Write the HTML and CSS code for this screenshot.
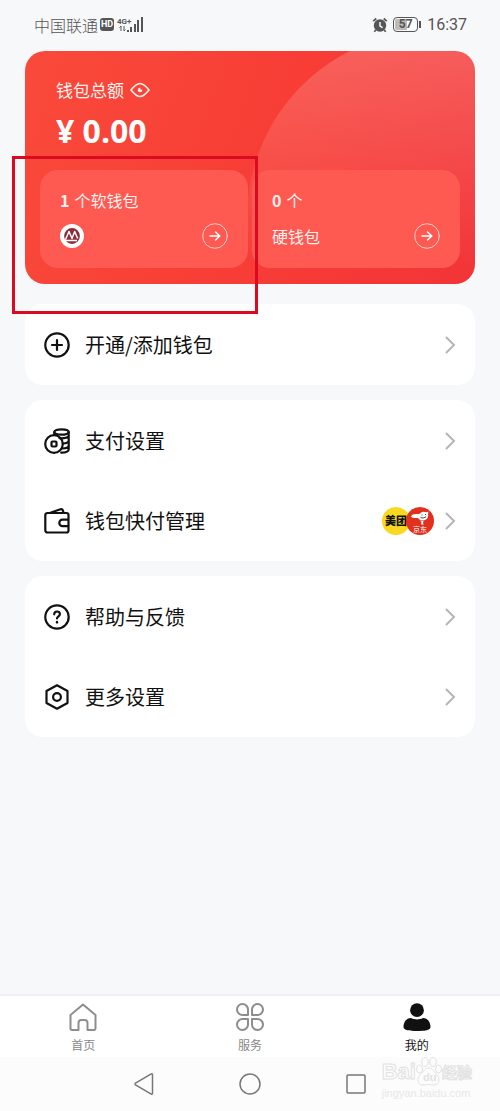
FILE: index.html
```html
<!DOCTYPE html>
<html lang="zh-CN">
<head>
<meta charset="utf-8">
<meta name="viewport" content="width=device-width, initial-scale=1">
<title>我的钱包</title>
<link rel="stylesheet" href="styles.css">
</head>
<body>
<header class="status">
  <div class="status-side">
    <span class="carrier">中国联通</span>
    <span class="hd">HD</span>
    <svg class="signal" width="28" height="18" viewBox="0 0 28 18" fill="currentColor">
      <text class="net" x="0" y="8">4G+</text>
      <path d="M4 10v5M2.500 11.500 4 10M7 10v5M7 15l1.500-1.500" stroke="currentColor" stroke-width="1" fill="none"/>
      <path d="M10 14h2v2h-2zM13 11h2v5h-2zM17 8h2v8h-2zM20 4h2v12h-2zM24 1h2v15h-2z"/>
    </svg>
  </div>
  <div class="status-side">
    <svg width="16" height="16" viewBox="0 0 16 16" fill="none" stroke="currentColor">
      <circle cx="8" cy="8.500" r="6.200" fill="currentColor" stroke="none"/>
      <path d="M1.200 4.200 4.300 1.500M14.800 4.200 11.700 1.500M3.800 13l-1.500 1.800M12.200 13l1.500 1.800" stroke-width="1.700"/>
      <path d="M8 5v4l2.600 1.600" stroke="#fff" stroke-width="1.400"/>
    </svg>
    <span class="battery">57</span>
    <time class="time">16:37</time>
  </div>
</header>

<main class="content">
  <section class="wallet">
    <div class="total">
      <h1 class="total-label">钱包总额
        <button class="eye" aria-label="显示金额"><svg width="20" height="18" viewBox="0 0 20 18" fill="none" stroke="currentColor" stroke-width="1.700"><path d="M1 9C5 4 7 2.500 10 2.500S15 4 19 9c-4 5-6 6.500-9 6.500S5 14 1 9z" stroke-linejoin="round"/><circle cx="10" cy="9" r="2.300" fill="currentColor" stroke="none"/><circle cx="11.200" cy="7.800" r="1" fill="#f94237" stroke="none"/></svg></button>
      </h1>
      <p class="amount">¥ 0.00</p>
    </div>
    <div class="kinds">
      <a class="kind" href="#">
        <span class="count"><b>1</b>个软钱包</span>
        <span class="kind-row">
          <svg width="24" height="24" viewBox="0 0 24 24"><circle cx="12" cy="12" r="12" fill="#fff"/><circle cx="12" cy="12" r="7.900" fill="#8e2a3a"/><path d="M5.500 15.500 9 7.500l3 7 2.700-7 3 7M5 16.500h12" fill="none" stroke="#fff" stroke-width="1.500" stroke-linejoin="round"/></svg>
          <svg class="go" width="26" height="26" viewBox="0 0 26 26"><circle cx="13" cy="13" r="12.300" opacity=".7"/><path d="M8 13h9.500M13.500 9 17.800 13l-4.300 4" stroke-width="1.500"/></svg>
        </span>
      </a>
      <a class="kind" href="#">
        <span class="count"><b>0</b>个</span>
        <span class="kind-row">硬钱包
          <svg class="go" width="26" height="26" viewBox="0 0 26 26"><circle cx="13" cy="13" r="12.300" opacity=".7"/><path d="M8 13h9.500M13.500 9 17.800 13l-4.300 4" stroke-width="1.500"/></svg>
        </span>
      </a>
    </div>
  </section>
  <div class="highlight"></div>

  <nav class="group">
    <a class="item" href="#">
      <svg class="icon" viewBox="0 0 26 26"><circle cx="13" cy="13" r="11.700"/><path d="M13 8v10M8 13h10"/></svg>
      <span class="name">开通/添加钱包</span>
      <svg class="chevron" viewBox="0 0 12 18"><path d="m2 1 8 8-8 8"/></svg>
    </a>
  </nav>

  <nav class="group">
    <a class="item" href="#">
      <svg class="icon" viewBox="0 0 26 26"><circle cx="10" cy="16" r="8.800"/><rect x="7.500" y="13.500" width="5" height="5" rx="1"/><ellipse cx="17.500" cy="4" rx="7.200" ry="2.700"/><path d="M10.300 4.200V7M24.700 4.200v17c0 2-2.500 3.300-7.500 3.500M15.500 10.200c5 .4 9.200-.7 9.200-2.700M18.800 15.500c3.500-.2 5.900-1.300 5.900-3M18.300 20.500c3.800-.1 6.400-1.300 6.400-3"/></svg>
      <span class="name">支付设置</span>
      <svg class="chevron" viewBox="0 0 12 18"><path d="m2 1 8 8-8 8"/></svg>
    </a>
    <a class="item" href="#">
      <svg class="icon" viewBox="0 0 26 26"><path d="M3.500 5h19a2 2 0 0 1 2 2v15.500a2 2 0 0 1-2 2h-19a2.200 2.200 0 0 1-2.200-2.200V7.200A2.200 2.200 0 0 1 3.500 5zM24.500 11.700H18.500a3.200 3.200 0 0 0 0 6.400h6M7 4.500l9.500-3.200c1.500-.5 2.300.3 3 3.200"/></svg>
      <span class="name">钱包快付管理</span>
      <span class="brands">
        <span class="brand meituan">美团</span>
        <span class="brand jd"><svg width="20" height="14" viewBox="0 0 20 14"><path d="M1 5.500C1.500 3.500 4 2.800 7 3c2 .1 3-.2 4-1.200 2-2 4-.8 5.500-.6L18.500.5 18 3c.8 4-1.500 6.300-5 6.300-2.500 0-4-.9-5-2.300C6 6.800 2 7.500 1 5.500z" fill="#fff"/><path d="M9.500 9.800h5l-1.500 1 .5 2.700h-2.500l.5-2.700z" fill="#fff"/><path d="M12 3.500v1M15.500 3v1M10.500 6.300c2 1.200 4.500.7 5.700-1" stroke="#333" stroke-width=".9" fill="none"/></svg><span class="jd-name">京东</span></span>
      </span>
      <svg class="chevron" viewBox="0 0 12 18"><path d="m2 1 8 8-8 8"/></svg>
    </a>
  </nav>

  <nav class="group">
    <a class="item" href="#">
      <svg class="icon" viewBox="0 0 26 26"><circle cx="13" cy="13" r="11.700"/><path d="M10.200 10.300C10.300 6.500 16 6.700 15.900 10.200c0 2.100-2.900 2.200-2.900 4.300"/><path d="M13 18v.4" stroke-width="2.400"/></svg>
      <span class="name">帮助与反馈</span>
      <svg class="chevron" viewBox="0 0 12 18"><path d="m2 1 8 8-8 8"/></svg>
    </a>
    <a class="item" href="#">
      <svg class="icon" viewBox="0 0 26 26"><path d="M13 1.300 23.500 7v12L13 24.700 2.500 19V7z"/><circle cx="13" cy="13" r="3.900"/></svg>
      <span class="name">更多设置</span>
      <svg class="chevron" viewBox="0 0 12 18"><path d="m2 1 8 8-8 8"/></svg>
    </a>
  </nav>
</main>

<nav class="tabs">
  <a class="tab" href="#"><svg class="tab-icon" viewBox="0 0 28 28"><path d="M14 1.500 26.500 12v13.500a1.500 1.500 0 0 1-1.500 1.500h-6.500V20a3 3 0 0 0-3-3h-3a3 3 0 0 0-3 3v7H3a1.500 1.500 0 0 1-1.500-1.500V12z"/></svg>首页</a>
  <a class="tab" href="#"><svg class="tab-icon" viewBox="0 0 28 28"><path d="M12 12H6.800A5.500 5.500 0 1 1 12 6.700zM16 12V6.700a5.500 5.500 0 1 1 5.200 5.300zM12 16v5.300A5.500 5.500 0 1 1 6.800 16zM16 16h5.200a5.500 5.500 0 1 1-5.200 5.300z"/></svg>服务</a>
  <a class="tab tab-on" href="#"><svg class="tab-icon" viewBox="0 0 28 28"><circle cx="14" cy="7.200" r="6.900"/><path d="M8 15c2 1 4 1.400 6 1.400s4-.4 6-1.400c5 0 7.500 4.500 7.500 9 0 3.500-6 4-13.500 4S.5 27.500.5 24c0-4.500 2.500-9 7.500-9z"/></svg>我的</a>
</nav>

<footer class="system">
  <button class="key" aria-label="返回"><svg width="22" height="22" viewBox="0 0 22 22"><path d="M19.500 1.500v19a.8.800 0 0 1-1.200.6L2.500 11.800a1 1 0 0 1 0-1.600L18.300.9a.8.800 0 0 1 1.200.6z"/></svg></button>
  <button class="key" aria-label="主页"><svg width="22" height="22" viewBox="0 0 22 22"><circle cx="11" cy="11" r="10"/></svg></button>
  <button class="key" aria-label="最近任务"><svg width="22" height="22" viewBox="0 0 22 22"><rect x="2" y="2" width="18" height="18" rx="1"/></svg></button>
  <div class="watermark">
    <div class="mark-row">Bai<svg width="26" height="30" viewBox="0 0 26 30"><ellipse cx="9" cy="5" rx="3.200" ry="4.500"/><ellipse cx="17" cy="5" rx="3.200" ry="4.500"/><ellipse cx="3.500" cy="12" rx="3" ry="4"/><ellipse cx="22.500" cy="12" rx="3" ry="4"/><path d="M13 11c4 0 5 4 8 7s3 10-3 10c-3 0-7-1-10 0-6 1-8-6-4-10s5-7 9-7z"/><text x="7" y="24" class="mark-du">du</text></svg><span class="mark-cn">经验</span></div>
    <div class="mark-url">jingyan.baidu.com</div>
  </div>
</footer>
</body>
</html>
```

FILE: styles.css
```css
* { box-sizing: border-box; }
body {
  margin: 0;
  min-height: 100vh;
  display: flex;
  flex-direction: column;
  background: #f7f8fa;
  color: #111;
  font-family: "Noto Sans CJK SC", sans-serif;
}
a { color: inherit; text-decoration: none; }
button { border: 0; padding: 0; background: none; color: inherit; display: flex; }
svg { display: block; flex: none; }
h1, p { margin: 0; font-weight: 400; }

.status {
  display: flex;
  justify-content: space-between;
  align-items: center;
  height: 51px;
  padding: 0 33px 2px 34px;
  color: #555;
}
.status-side { display: flex; align-items: center; gap: 2px; }
.carrier { font-size: 16px; font-weight: 300; line-height: 24px; }
.hd {
  padding: 0 1px;
  border-radius: 3px;
  background: #555;
  color: #fff;
  font: 700 9px/13px Roboto, sans-serif;
}
.signal { margin-left: 1px; }
.net { font: 700 8px Roboto, sans-serif; }
.battery {
  position: relative;
  width: 25px;
  margin: 0 7px 0 3px;
  border: 1px solid #555;
  border-radius: 4px;
  background: linear-gradient(90deg, #bbb 57%, #fff 57%) content-box;
  padding: 1px;
  font: 700 12px/11px Roboto, sans-serif;
  text-align: center;
}
.battery::after {
  content: "";
  position: absolute;
  right: -4px;
  top: 3px;
  width: 2px;
  height: 7px;
  background: #555;
}
.time { font: 400 16px/24px Roboto, sans-serif; }

.content {
  position: relative;
  flex: 1;
  padding: 0 25px 20px;
}
.wallet {
  position: relative;
  overflow: hidden;
  margin-bottom: 20px;
  padding: 26px 15px 16px;
  border-radius: 20px;
  background: linear-gradient(110deg, #f94a3b, #f83f36 45%, #f23437);
  color: #fff0ed;
}
.wallet::before {
  content: "";
  position: absolute;
  right: -146px;
  top: -20px;
  width: 374px;
  height: 374px;
  border-radius: 50%;
  background: linear-gradient(rgba(255, 255, 255, .2), rgba(255, 255, 255, 0) 65%);
}
.total { position: relative; padding-left: 16px; }
.total-label {
  display: flex;
  align-items: center;
  gap: 6px;
  font-size: 17px;
  line-height: 26px;
}
.amount {
  margin-bottom: 11px;
  color: #fff;
  font: 700 32px/56px "Open Sans", sans-serif;
}
.kinds { position: relative; display: flex; gap: 4px; }
.kind {
  flex: 1;
  padding: 17px 20px 19px;
  border-radius: 18px;
  background: #ff5a52;
  font-size: 16px;
  line-height: 26px;
}
.count { display: flex; gap: 5px; margin-bottom: 10px; }
.kind-row { display: flex; align-items: center; justify-content: space-between; }
.go { fill: none; stroke: #fff; stroke-linecap: round; stroke-linejoin: round; }

.highlight {
  position: absolute;
  left: 12px;
  top: 105px;
  width: 246px;
  height: 158px;
  border: 3px solid #dc0a20;
}

.group {
  margin-bottom: 15px;
  border-radius: 18px;
  background: #fff;
}
.item {
  display: flex;
  align-items: center;
  height: 81px;
  padding: 0 19px;
}
.item + .item { height: 80px; }
.icon {
  width: 26px;
  height: 26px;
  margin-right: 15px;
  fill: none;
  stroke: #111;
  stroke-width: 2.2;
  stroke-linecap: round;
  stroke-linejoin: round;
}
.name { flex: 1; font-size: 20px; line-height: 30px; }
.chevron { width: 12px; height: 18px; fill: none; stroke: #b5b5b5; stroke-width: 2; }
.brands { display: flex; margin-right: 10px; }
.brand {
  width: 28px;
  height: 28px;
  border-radius: 50%;
  overflow: hidden;
  text-align: center;
}
.meituan {
  margin-right: -4px;
  background: #f9d81f;
  font-size: 11px;
  font-weight: 900;
  line-height: 27px;
  white-space: nowrap;
}
.jd {
  display: flex;
  flex-direction: column;
  align-items: center;
  padding-top: 4px;
  background: #e1301e;
  color: #fff;
}
.jd-name { font-size: 7px; line-height: 8px; }

.tabs {
  display: flex;
  height: 63px;
  border-top: 2px solid #eff0f4;
  background: #fff;
}
.tab {
  flex: 1;
  display: flex;
  flex-direction: column;
  align-items: center;
  gap: 5px;
  padding-top: 7px;
  color: #888;
  font-size: 12px;
  line-height: 18px;
}
.tab-icon {
  width: 28px;
  height: 28px;
  fill: none;
  stroke: #8d8d8d;
  stroke-width: 2;
  stroke-linejoin: round;
}
.tab-on { color: #111; }
.tab-on .tab-icon { fill: #111; stroke: none; }

.system {
  position: relative;
  display: flex;
  justify-content: center;
  align-items: center;
  gap: 84px;
  height: 54px;
  background: #fcfcfc;
}
.key svg { fill: none; stroke: #777; stroke-width: 1.500; }
.watermark {
  position: absolute;
  right: 28px;
  top: 0;
  color: #fcfcfc;
  -webkit-text-stroke: 1px #e2e2e2;
}
.mark-row {
  display: flex;
  align-items: center;
  font: 700 22px/30px "Liberation Sans", sans-serif;
}
.mark-row svg { fill: #fcfcfc; stroke: #e2e2e2; }
.mark-du { font: 700 11px "Liberation Sans", sans-serif; stroke: none; fill: #e2e2e2; -webkit-text-stroke: 0; }
.mark-cn { font: 700 15px/30px "Noto Sans CJK SC", sans-serif; }
.mark-url {
  color: #e8e8e8;
  font: 400 11px/12px "Liberation Sans", sans-serif;
  -webkit-text-stroke: 0;
}
```
